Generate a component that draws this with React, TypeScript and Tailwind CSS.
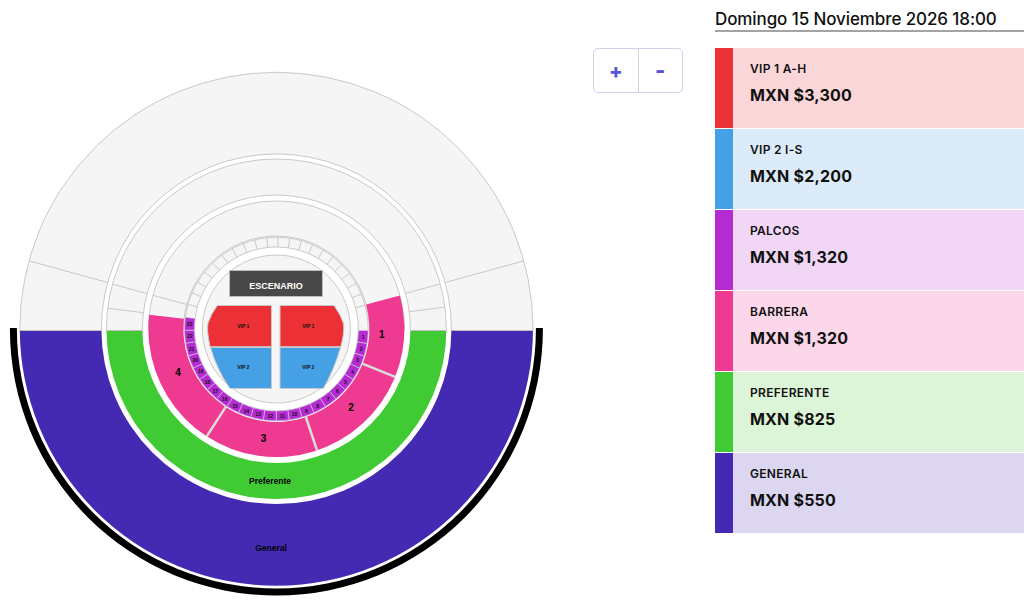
const CX = 276.4;
const CY = 329;
const LINE = "#c9c9c9";

// point on a circle, angle in degrees clockwise from the right
const pt = (r: number, a: number) => {
  const t = (a * Math.PI) / 180;
  return `${(CX + r * Math.cos(t)).toFixed(2)} ${(CY + r * Math.sin(t)).toFixed(2)}`;
};

const sector = (outer: number, inner: number, a0: number, a1: number) => {
  const large = a1 - a0 > 180 ? 1 : 0;
  return `M${pt(outer, a0)} A${outer} ${outer} 0 ${large} 1 ${pt(outer, a1)} L${pt(inner, a1)} A${inner} ${inner} 0 ${large} 0 ${pt(inner, a0)} Z`;
};

const ring = (outer: number, inner: number) =>
  `M${CX - outer} ${CY} A${outer} ${outer} 0 1 1 ${CX + outer} ${CY} A${outer} ${outer} 0 1 1 ${CX - outer} ${CY} Z M${CX - inner} ${CY} A${inner} ${inner} 0 1 0 ${CX + inner} ${CY} A${inner} ${inner} 0 1 0 ${CX - inner} ${CY} Z`;

const Radial = ({ a, r0, r1, color = LINE, w = 1 }: { a: number; r0: number; r1: number; color?: string; w?: number }) => (
  <path d={`M${pt(r0, a)} L${pt(r1, a)}`} stroke={color} strokeWidth={w} fill="none" />
);

// closed palcos over the stage, measured off the picture
const upperCells = [
  ...Array.from({ length: 10 }, (_, i) => 264 - i * 7.6),
  ...Array.from({ length: 11 }, (_, i) => 271 + i * 7.4),
];
const palcos = Array.from({ length: 23 }, (_, i) => i + 1);

const SeatMap = () => (
  <svg width="593" height="601" viewBox="0 0 593 601" className="shrink-0 font-['Liberation_Sans',sans-serif]">
    <defs>
      <clipPath id="upper">
        <rect x="0" y="0" width="593" height="330.5" />
      </clipPath>
      <clipPath id="lower">
        <rect x="0" y="330.5" width="593" height="271" />
      </clipPath>
      <clipPath id="lip">
        <rect x="0" y="328" width="593" height="273" />
      </clipPath>
    </defs>

    {/* closed upper half */}
    <g clipPath="url(#upper)" fill="#f5f5f5" stroke={LINE} fillRule="evenodd">
      <path d={ring(256.6, 175)} />
      <path d={ring(170, 134)} />
      <path d={ring(128, 93)} />
    </g>
    <path d={ring(91.8, 82)} fill="#f5f5f5" stroke={LINE} fillRule="evenodd" />
    <circle cx={CX} cy={CY} r="74" fill="#f5f5f5" stroke={LINE} />

    <Radial a={195.4} r0={175} r1={256.6} />
    <Radial a={-15.4} r0={175} r1={256.6} />
    <Radial a={195.3} r0={134} r1={170} />
    <Radial a={-15.4} r0={134} r1={170} />
    <Radial a={187} r0={134} r1={170} />
    <Radial a={-7.4} r0={134} r1={170} />
    <Radial a={195.3} r0={93} r1={128} />
    {upperCells.map((a) => (
      <Radial key={a} a={a} r0={82} r1={91.8} />
    ))}

    {/* lower half */}
    <g clipPath="url(#lower)" fillRule="evenodd">
      <path d={ring(256.6, 175)} fill="#442ab3" />
      <path d={ring(170, 134)} fill="#40cb35" />
    </g>
    <path d="M20 330.5H101M107 330.5H142M411 330.5H446M452 330.5H533" stroke="#bdbdbd" />
    <path d={ring(266.5, 259.5)} fill="#000000" fillRule="evenodd" clipPath="url(#lip)" />

    {/* barrera */}
    <path d={sector(128, 93, -15.2, 186.4)} fill="#ee3a90" />
    <Radial a={22} r0={92} r1={128} color="#dcdcdc" w={2.5} />
    <Radial a={71.5} r0={92} r1={128} color="#dcdcdc" w={2.5} />
    <Radial a={123} r0={92} r1={128} color="#dcdcdc" w={2.5} />

    {/* palcos */}
    {palcos.map((n) => {
      const a = 1 + (n - 1) * 8.1;
      return (
        <path key={n} d={sector(91.8, 82, a, a + 8.1)} fill="#b42bd1" stroke="#d9cfdc" strokeWidth="0.6" />
      );
    })}
    {palcos.map((n) => {
      const a = ((5 + (n - 1) * 8.1) * Math.PI) / 180;
      return (
        <text
          key={n}
          x={CX + 87 * Math.cos(a)}
          y={CY + 87 * Math.sin(a)}
          textAnchor="middle"
          dominantBaseline="central"
          className="text-[5px] font-bold"
          fill="#111"
        >
          {n}
        </text>
      );
    })}

    {/* escenario */}
    <rect x="229.5" y="270.5" width="93" height="26" fill="#484848" stroke="#bdbdbd" />
    <text x="276" y="286" textAnchor="middle" dominantBaseline="central" className="text-[9px] font-bold" fill="#fff">
      ESCENARIO
    </text>

    {/* vip blocks */}
    <path d="M217.3 305.5H271.5V346.7H210Q206.5 330 208 323Q211 314 217.3 305.5Z" fill="#eb3136" stroke={LINE} />
    <path d="M280 305.5H334Q341 315 343.6 324Q344.5 333 340.8 346.7H280Z" fill="#eb3136" stroke={LINE} />
    <path d="M210.5 347.5H271.5V388.5H230Q217 370 210.5 347.5Z" fill="#45a0e6" stroke={LINE} />
    <path d="M280 347.5H340.5Q334 370 323.3 388.5H280Z" fill="#45a0e6" stroke={LINE} />
    {[
      ["VIP 1", 243.3, 326],
      ["VIP 1", 308.3, 326],
      ["VIP 2", 243.3, 367.3],
      ["VIP 2", 308.3, 367.3],
    ].map(([label, x, y]) => (
      <text
        key={`${x}-${y}`}
        x={x}
        y={y}
        textAnchor="middle"
        dominantBaseline="central"
        className="text-[5px] font-bold"
        fill="#111"
      >
        {label}
      </text>
    ))}

    {/* section labels */}
    {[
      ["1", 381.7, 334, "text-[10px]"],
      ["2", 351, 407, "text-[10px]"],
      ["3", 263.5, 438, "text-[10px]"],
      ["4", 178, 372.5, "text-[10px]"],
      ["Preferente", 270, 480.5, "text-[8.5px]"],
      ["General", 271, 548, "text-[8.5px]"],
    ].map(([label, x, y, size]) => (
      <text
        key={label}
        x={x}
        y={y}
        textAnchor="middle"
        dominantBaseline="central"
        className={`${size} font-bold`}
        fill="#000"
      >
        {label}
      </text>
    ))}
  </svg>
);

const ZoomControls = () => (
  <div className="mt-[48px] flex h-[45px] w-[90px] shrink-0 rounded-[5px] border-[1.5px] border-[#d3d1ea] bg-white text-[#5b55d8] font-['Inter',sans-serif]">
    <button className="flex flex-1 items-center justify-center text-[20px] font-extrabold border-r-[1.5px] border-[#d3d1ea]">+</button>
    <button className="flex flex-1 items-center justify-center text-[22px] font-extrabold">-</button>
  </div>
);

const prices = [
  { name: "VIP 1 A-H", price: "MXN $3,300", bar: "bg-[#eb3136]", bg: "bg-[#fbd6d9]" },
  { name: "VIP 2 I-S", price: "MXN $2,200", bar: "bg-[#45a0e6]", bg: "bg-[#dcebf9]" },
  { name: "PALCOS", price: "MXN $1,320", bar: "bg-[#b42bd1]", bg: "bg-[#f1d6f6]" },
  { name: "BARRERA", price: "MXN $1,320", bar: "bg-[#ee3a90]", bg: "bg-[#fcd7e9]" },
  { name: "PREFERENTE", price: "MXN $825", bar: "bg-[#40cb35]", bg: "bg-[#dcf4d7]" },
  { name: "GENERAL", price: "MXN $550", bar: "bg-[#442ab3]", bg: "bg-[#dcd6f0]" },
];

const PricePanel = () => (
  <div className="ml-[32px] flex-1 font-['Inter',sans-serif] text-[#111]">
    <div className="h-[32px] border-b-2 border-[#a3a3a3] pt-[6px] text-[17px] leading-[26px] font-medium tracking-[-0.1px] whitespace-nowrap">
      Domingo 15 Noviembre 2026 18:00
    </div>
    <div className="mt-[16px] flex flex-col gap-[1.5px]">
      {prices.map((p) => (
        <div key={p.name} className={`flex h-[79.5px] ${p.bg}`}>
          <div className={`w-[18px] ${p.bar}`} />
          <div className="pl-[17px] pt-[13px]">
            <div className="text-[12px] leading-[16px] font-semibold tracking-[0.3px]">{p.name}</div>
            <div className="mt-[6px] text-[16px] leading-[24px] font-bold tracking-[0.2px]">{p.price}</div>
          </div>
        </div>
      ))}
    </div>
  </div>
);

export default function App() {
  return (
    <div className="flex h-[601px] w-[1024px] overflow-hidden bg-white">
      <SeatMap />
      <ZoomControls />
      <PricePanel />
    </div>
  );
}
